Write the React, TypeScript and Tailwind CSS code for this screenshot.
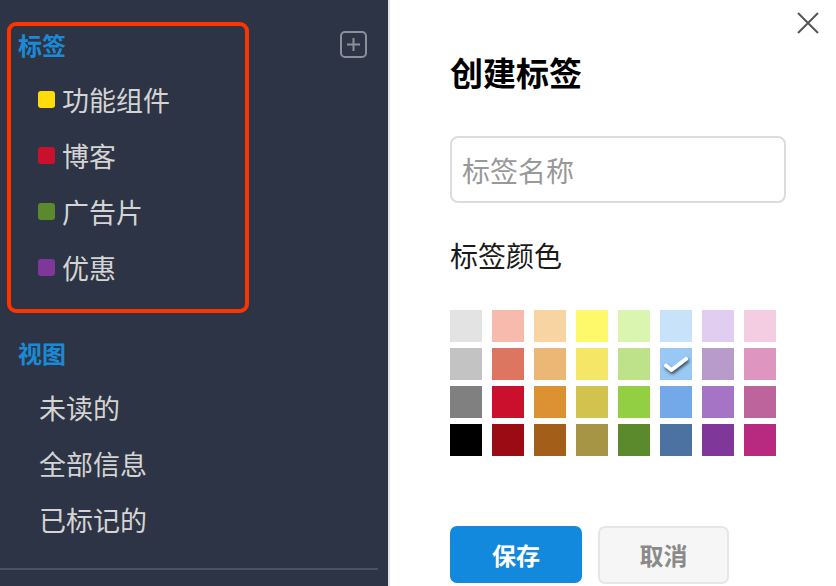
import React from 'react';

const tags = [
  { name: '功能组件', color: '#fedc0b' },
  { name: '博客', color: '#cb102e' },
  { name: '广告片', color: '#5a8a2b' },
  { name: '优惠', color: '#7f3899' },
];

const views = ['未读的', '全部信息', '已标记的'];

const palette = [
  ['#e3e3e3', '#f7bbae', '#f8d4a3', '#fdf96b', '#d9f5b0', '#c8e3f9', '#e0cdf0', '#f4cde3'],
  ['#c3c3c3', '#dd7561', '#ecb774', '#f6e666', '#bde28a', '#98c8f3', '#b89bcb', '#de96c0'],
  ['#808080', '#cb102e', '#dc9132', '#d2c24e', '#92cf42', '#73a8e9', '#a674c4', '#bd649c'],
  ['#000000', '#9a0b14', '#a35f19', '#a59545', '#5a8a2b', '#4b72a1', '#7f3899', '#b72a80'],
];

const font = { fontFamily: "'Noto Sans CJK SC', 'Noto Sans', sans-serif" };

function Sidebar() {
  return (
    <aside className="relative w-[388px] shrink-0 bg-[#2d3445] pl-[18px] pt-[31px]">
      {/* highlight annotation */}
      <div className="absolute left-[7px] top-[22px] w-[242px] h-[291px] rounded-[9px] border-[4px] border-[#ff3300]" />

      <div className="flex h-[27px] items-center justify-between pr-[21px]">
        <span className="text-[24px] font-bold leading-none text-[#1a8ad6]">标签</span>
        <svg width="27" height="27" viewBox="0 0 27 27" fill="none" stroke="#8b9099" strokeWidth="2">
          <rect x="1" y="1" width="25" height="25" rx="4" />
          <path d="M13.5 7v13M7 13.5h13" />
        </svg>
      </div>

      <ul className="mt-[13px]">
        {tags.map((t) => (
          <li key={t.name} className="flex h-[56px] items-center gap-[7px] pl-[20px]">
            <span className="h-[17px] w-[17px] rounded-[3px]" style={{ backgroundColor: t.color }} />
            <span className="text-[27px] leading-none text-[#d4d4d4]">{t.name}</span>
          </li>
        ))}
      </ul>

      <div className="mt-[44px] flex h-[27px] items-center">
        <span className="text-[24px] font-bold leading-none text-[#1a8ad6]">视图</span>
      </div>

      <ul className="mt-[13px]">
        {views.map((v) => (
          <li key={v} className="flex h-[56px] items-center pl-[21px] text-[27px] leading-none text-[#d4d4d4]">
            {v}
          </li>
        ))}
      </ul>

      <div className="-ml-[18px] mt-[21px] h-[2px] w-[378px] bg-[#4b5361]" />
    </aside>
  );
}

function Dialog() {
  return (
    <section className="relative flex-1 border-l-[2px] border-[#e2e2e2] bg-white pl-[60px]">
      <button className="absolute right-[16px] top-[11px] h-[24px] w-[24px]">
        <svg width="24" height="24" viewBox="0 0 24 24" fill="none" stroke="#555555" strokeWidth="2">
          <path d="M2 2l20 20M22 2L2 22" />
        </svg>
      </button>

      <h1 className="mt-[52px] text-[33px] font-bold leading-[40px] text-black">创建标签</h1>

      <div className="mt-[44px] flex h-[67px] w-[336px] items-center rounded-[8px] border-[2px] border-[#dcdcdc] pl-[10px]">
        <span className="text-[28px] leading-none text-[#999999]">标签名称</span>
      </div>

      <div className="mt-[34px] text-[28px] leading-[36px] text-[#1a1a1a]">标签颜色</div>

      <div className="mt-[37px] flex flex-col gap-[6px]">
        {palette.map((row, r) => (
          <div key={r} className="flex gap-[10px]">
            {row.map((c, i) => (
              <div key={i} className="relative flex h-[32px] w-[32px] items-center justify-center" style={{ backgroundColor: c }}>
                {r === 1 && i === 5 && (
                  <svg width="30" height="26" viewBox="0 0 30 26" fill="none" style={{ filter: 'drop-shadow(1px 2px 1.5px rgba(0,0,0,0.65))' }}>
                    <path d="M5 14.5l5.5 4.5L25 8" stroke="#ffffff" strokeWidth="4" strokeLinecap="round" strokeLinejoin="round" />
                  </svg>
                )}
              </div>
            ))}
          </div>
        ))}
      </div>

      <div className="mt-[70px] flex gap-[16px]">
        <button className="h-[57px] w-[132px] rounded-[7px] bg-[#1289dc] text-[24px] font-bold text-white">保存</button>
        <button className="h-[58px] w-[131px] rounded-[7px] border-[2px] border-[#e6e6e6] bg-[#f6f6f6] text-[24px] font-bold text-[#8a8a8a]">
          取消
        </button>
      </div>
    </section>
  );
}

export default function App() {
  return (
    <div className="flex h-[586px] w-[836px] overflow-hidden" style={font}>
      <Sidebar />
      <Dialog />
    </div>
  );
}
